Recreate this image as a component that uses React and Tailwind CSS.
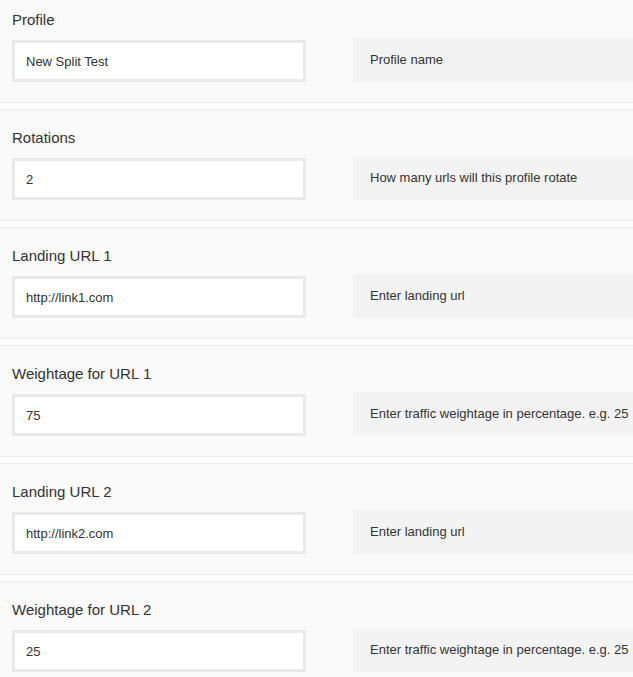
const fields = [
  { label: 'Profile', value: 'New Split Test', help: 'Profile name' },
  { label: 'Rotations', value: '2', help: 'How many urls will this profile rotate' },
  { label: 'Landing URL 1', value: 'http://link1.com', help: 'Enter landing url' },
  { label: 'Weightage for URL 1', value: '75', help: 'Enter traffic weightage in percentage. e.g. 25' },
  { label: 'Landing URL 2', value: 'http://link2.com', help: 'Enter landing url' },
  { label: 'Weightage for URL 2', value: '25', help: 'Enter traffic weightage in percentage. e.g. 25' },
];

function Field({ label, value, help }) {
  return (
    <div className="bg-[#fafafa] border-y border-[#ececec] pt-[18px] pb-[20px] pl-3 mb-[6px]">
      <label className="block text-[15px] leading-5 text-[#333]">{label}</label>
      <div className="flex items-end mt-2">
        <input
          readOnly
          value={value}
          className="w-[294px] h-[42px] shrink-0 bg-white border-[3px] border-[#e9e9e9] px-[11px] text-[13px] text-[#333] outline-none"
          style={{ fontFamily: 'inherit' }}
        />
        <div className="flex-1 ml-[47px] h-[44px] flex items-center pl-[17px] bg-[#f3f3f3] text-[13px] text-[#333] whitespace-nowrap overflow-hidden">
          {help}
        </div>
      </div>
    </div>
  );
}

export default function App() {
  return (
    <div className="w-[633px] h-[677px] overflow-hidden bg-white font-['Liberation_Sans',Arial,sans-serif]">
      <div className="-mt-[9px]">
        {fields.map(f => (
          <Field key={f.label} {...f} />
        ))}
      </div>
    </div>
  );
}
